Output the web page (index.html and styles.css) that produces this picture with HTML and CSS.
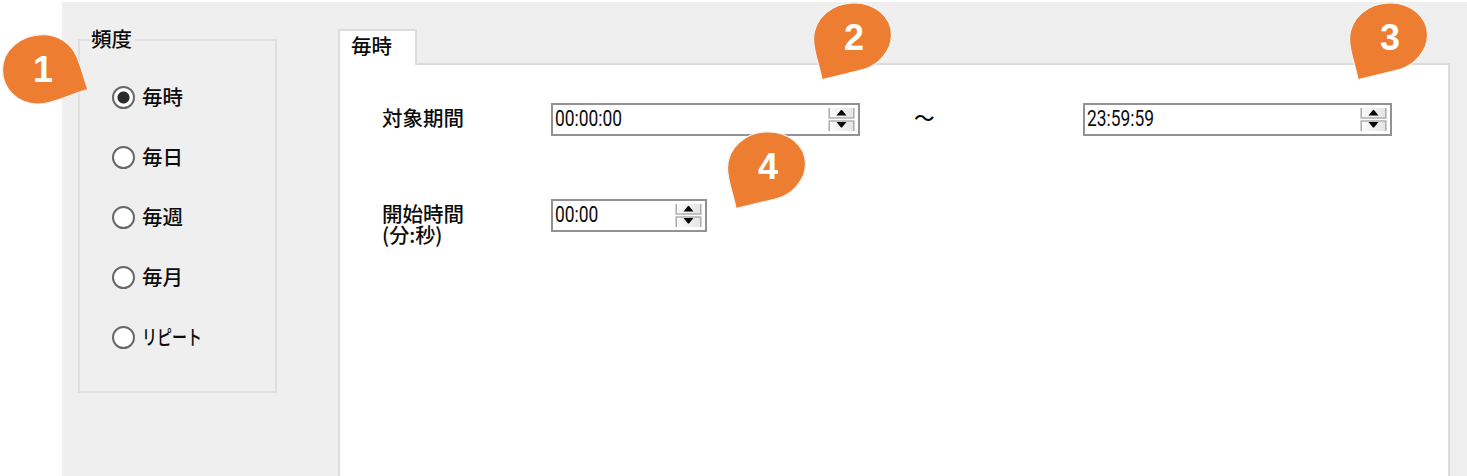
FILE: index.html
```html
<!DOCTYPE html>
<html lang="ja">
<head>
<meta charset="utf-8">
<title>頻度</title>
<link rel="stylesheet" href="styles.css">
</head>
<body>
<svg class="defs" width="0" height="0" aria-hidden="true">
  <defs>
    <linearGradient id="face" x1="0" y1="0" x2="1" y2="0"><stop offset="0" stop-color="#fafafa"/><stop offset="1" stop-color="#e4e4e4"/></linearGradient>
    <g id="spin">
      <path d="M1 1H26V11H1ZM1 14H26V24H1Z" fill="url(#face)"/>
      <path d="M1.2 1V11H25.8V1M1.2 24V14H25.8V24" fill="none" stroke="#b0b0b0" stroke-width="1.6"/>
      <path d="M8.500 8.400 13 3H14L18.500 8.400ZM8.500 15.100H18.500L14 20.500H13Z" fill="#080808"/>
    </g>
    <path id="drop" d="M10 78.500C8 66 1.500 51 1.500 38C2 17 20 1.800 42 1.800C63 1.800 79.500 16 79.500 34C79.500 50 66 65 51 68.500C37 72 23 75.500 10 78.500Z" fill="#ed7d31" stroke="#f4f5f6" stroke-width="1.200"/>
  </defs>
</svg>
<main class="window">
  <fieldset class="group">
    <legend>頻度</legend>
    <div class="option"><i class="radio on"></i><span>毎時</span></div>
    <div class="option"><i class="radio"></i><span>毎日</span></div>
    <div class="option"><i class="radio"></i><span>毎週</span></div>
    <div class="option"><i class="radio"></i><span>毎月</span></div>
    <div class="option"><i class="radio"></i><span class="kana">リピート</span></div>
  </fieldset>
  <section class="tabs">
    <div class="tab">毎時</div>
    <div class="panel">
      <div class="row">
        <div class="label">対象期間</div>
        <div class="field"><span class="digits">00:00:00</span><svg class="spin" viewBox="0 0 27 25"><use href="#spin"/></svg></div>
        <div class="tilde">～</div>
        <div class="field"><span class="digits">23:59:59</span><svg class="spin" viewBox="0 0 27 25"><use href="#spin"/></svg></div>
      </div>
      <div class="row">
        <div class="label">開始時間<br><span class="unit">(分:秒)</span></div>
        <div class="field short"><span class="digits">00:00</span><svg class="spin" viewBox="0 0 27 25"><use href="#spin"/></svg></div>
      </div>
    </div>
  </section>
</main>
<div class="pin pin1"><svg viewBox="0 0 90 74"><path d="M88 56.500C84 46 82 36 77 24C71 10 58 1.600 43 1.600C21 1.600 2.500 17 2.500 37C2.500 56 18 71 38 71C54 71 70 61 88 56.500Z" fill="#ed7d31" stroke="#f4f5f6" stroke-width="1.200"/></svg><b>1</b></div>
<div class="pin pin2"><svg viewBox="0 0 82 80"><use href="#drop"/></svg><b>2</b></div>
<div class="pin pin3"><svg viewBox="0 0 82 80"><use href="#drop"/></svg><b>3</b></div>
<div class="pin pin4"><svg viewBox="0 0 82 80"><use href="#drop"/></svg><b>4</b></div>
</body>
</html>
```
FILE: styles.css
```css
* { box-sizing: border-box; }
body {
  margin: 0;
  height: 476px;
  padding: 2px 0 0 62px;
  overflow: hidden;
  background: #fff;
  color: #0c0c0c;
  font: 500 20.5px/21px "Noto Sans CJK JP", sans-serif;
}
.defs { position: absolute; }
.window {
  display: flex;
  align-items: flex-start;
  height: 474px;
  padding-left: 16px;
  background: #efefef;
}
.group {
  width: 199px;
  height: 365px;
  margin: 26px 0 0;
  padding: 33px 0 0 32px;
  border: 2px solid #dfdfdf;
}
.group legend {
  height: 24px;
  margin-left: -22px;
  padding: 0 3px 0 1px;
  line-height: 20px;
}
.option {
  display: flex;
  align-items: center;
  gap: 7px;
  height: 24px;
  margin-bottom: 36px;
}
.option span { margin-top: -1px; }
.radio {
  width: 23px;
  height: 23px;
  border: 2px solid #686868;
  border-radius: 50%;
  background: #fff;
}
.radio.on { background: radial-gradient(circle, #2c2c2c 0 5.5px, #fff 6.5px); }
.kana {
  transform: scaleX(.73);
  transform-origin: left;
}
.tabs {
  width: 1112px;
  margin: 27px 0 0 61px;
}
.tab {
  position: relative;
  z-index: 1;
  width: 79px;
  height: 36px;
  margin-bottom: -2px;
  padding: 4px 0 0 11px;
  border: 2px solid #dcdcdc;
  border-bottom: 0;
  background: #fff;
}
.panel {
  height: 420px;
  padding: 38px 0 0 42px;
  border: 2px solid #dcdcdc;
  background: #fff;
}
.row {
  display: flex;
  align-items: flex-start;
  height: 96px;
}
.label {
  width: 169px;
  padding-top: 4px;
}
.unit {
  display: inline-block;
  transform: scaleX(.98);
  transform-origin: left;
}
.field {
  display: flex;
  justify-content: space-between;
  width: 309px;
  height: 33px;
  padding: 2px 3px 0 2px;
  border: 2px solid #929292;
  background: #fff;
}
.field.short { width: 156px; }
.digits {
  font: 21.5px/23px Roboto, sans-serif;
  transform: scaleX(.81);
  transform-origin: left;
}
.spin {
  width: 27px;
  height: 25px;
}
.tilde {
  width: 223px;
  padding: 4px 0 0 54px;
}
.pin { position: absolute; }
.pin svg { display: block; width: 82px; height: 80px; }
.pin b {
  position: absolute;
  left: 32px;
  top: 19px;
  color: #fff;
  font: bold 36px/36px "Liberation Sans", Arial, sans-serif;
}
.pin1 { left: 0; top: 33px; }
.pin1 svg { width: 90px; height: 74px; }
.pin1 b { left: 33px; }
.pin2 { left: 812px; top: 1px; }
.pin3 { left: 1348px; top: 1px; }
.pin4 { left: 726px; top: 130px; }
```
